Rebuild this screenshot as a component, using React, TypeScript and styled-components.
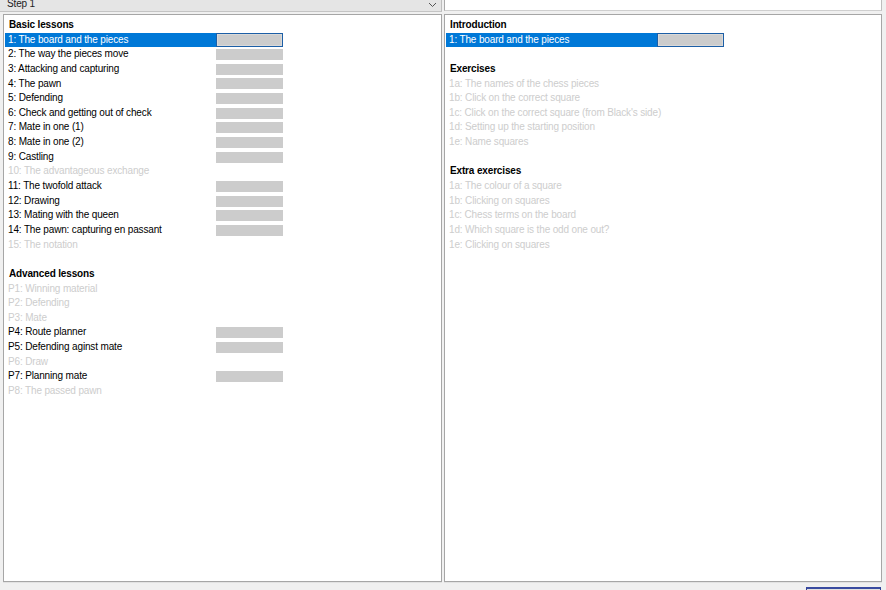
import React from "react";
import styled, { createGlobalStyle } from "styled-components";

const GlobalStyle = createGlobalStyle`
  html, body { margin: 0; padding: 0; background: #f0f0f0; overflow: hidden; }
  body { font-family: "Liberation Sans", Arial, sans-serif; }
  * { box-sizing: border-box; }
`;

const ROW = 14.65;

const Window = styled.div`
  width: 886px;
  height: 590px;
  background: #f0f0f0;
  display: flex;
  flex-direction: column;
  overflow: hidden;
  font-family: "Liberation Sans", Arial, sans-serif;
  font-size: 10px;
  letter-spacing: -0.15px;
  color: #000;
`;

const TopBar = styled.div`
  display: grid;
  grid-template-columns: 442px 438px;
  column-gap: 2px;
  height: 12px;
  flex-shrink: 0;
`;

const Combo = styled.div`
  height: 12px;
  background: #e5e5e5;
  border-bottom: 1px solid #c4c4c4;
  border-right: 1px solid #bdbdbd;
  display: flex;
  align-items: flex-end;
  justify-content: space-between;
  padding: 0 4px 0 7px;
  line-height: 14px;
  color: #222;
`;

const Chevron = styled.svg`
  width: 9px;
  height: 6px;
  margin-bottom: 3px;
`;

const TextBox = styled.div`
  height: 11px;
  background: #fff;
  border-left: 1px solid #a9a9a9;
  border-right: 1px solid #bdbdbd;
  border-bottom: 1px solid #cfcfcf;
`;

const Panels = styled.div`
  display: grid;
  grid-template-columns: 439px 438px;
  column-gap: 2px;
  padding-left: 3px;
  margin-top: 2px;
  height: 568px;
  flex-shrink: 0;
`;

const Panel = styled.div`
  background: #fff;
  border: 1px solid #a6a6a6;
  box-shadow: 0 1px 0 #e2e2e2;
  padding: 3px 1px 2px;
  overflow: hidden;
`;

const Section = styled.div<{ $first?: boolean }>`
  margin-top: ${(p) => (p.$first ? 0 : ROW)}px;
`;

const Header = styled.div`
  height: ${ROW}px;
  line-height: ${ROW}px;
  padding-left: 4px;
  font-weight: bold;
`;

const Row = styled.div`
  height: ${ROW}px;
  display: flex;
  align-items: center;
  white-space: nowrap;
`;

const Label = styled.div<{ $selected?: boolean; $disabled?: boolean }>`
  width: 211px;
  height: 100%;
  line-height: ${ROW}px;
  padding-left: 3px;
  background: ${(p) => (p.$selected ? "#0078d7" : "transparent")};
  color: ${(p) => (p.$selected ? "#fff" : p.$disabled ? "#cdcdcd" : "#000")};
  overflow: visible;
`;

const Bar = styled.div<{ $selected?: boolean }>`
  width: 67px;
  height: ${(p) => (p.$selected ? "100%" : "11px")};
  background: #cccccc;
  border: ${(p) => (p.$selected ? "1px solid #1d5fa6" : "none")};
  box-shadow: ${(p) => (p.$selected ? "inset 0 0 0 1px #d9d9d9" : "none")};
`;

const Footer = styled.div`
  display: flex;
  justify-content: flex-end;
  padding: 5px 5px 0 0;
  flex-shrink: 0;
`;

const Button = styled.div`
  width: 75px;
  height: 23px;
  border: 1px solid #2e3f96;
  border-top: 2px solid #3a4ba0;
  background: #e1e1e1;
`;

type Item = { text: string; enabled: boolean };
type SectionData = { title: string; items: Item[] };

const on = (text: string): Item => ({ text, enabled: true });
const off = (text: string): Item => ({ text, enabled: false });

const leftSections: SectionData[] = [
  {
    title: "Basic lessons",
    items: [
      on("1: The board and the pieces"),
      on("2: The way the pieces move"),
      on("3: Attacking and capturing"),
      on("4: The pawn"),
      on("5: Defending"),
      on("6: Check and getting out of check"),
      on("7: Mate in one (1)"),
      on("8: Mate in one (2)"),
      on("9: Castling"),
      off("10: The advantageous exchange"),
      on("11: The twofold attack"),
      on("12: Drawing"),
      on("13: Mating with the queen"),
      on("14: The pawn: capturing en passant"),
      off("15: The notation"),
    ],
  },
  {
    title: "Advanced lessons",
    items: [
      off("P1: Winning material"),
      off("P2: Defending"),
      off("P3: Mate"),
      on("P4: Route planner"),
      on("P5: Defending aginst mate"),
      off("P6: Draw"),
      on("P7: Planning mate"),
      off("P8: The passed pawn"),
    ],
  },
];

const rightSections: SectionData[] = [
  { title: "Introduction", items: [on("1: The board and the pieces")] },
  {
    title: "Exercises",
    items: [
      off("1a: The names of the chess pieces"),
      off("1b: Click on the correct square"),
      off("1c: Click on the correct square (from Black's side)"),
      off("1d: Setting up the starting position"),
      off("1e: Name squares"),
    ],
  },
  {
    title: "Extra exercises",
    items: [
      off("1a: The colour of a square"),
      off("1b: Clicking on squares"),
      off("1c: Chess terms on the board"),
      off("1d: Which square is the odd one out?"),
      off("1e: Clicking on squares"),
    ],
  },
];

function LessonList({ sections }: { sections: SectionData[] }) {
  return (
    <Panel>
      {sections.map((s, si) => (
        <Section key={s.title} $first={si === 0}>
          <Header>{s.title}</Header>
          {s.items.map((it, ii) => {
            const selected = si === 0 && ii === 0;
            return (
              <Row key={it.text}>
                <Label $selected={selected} $disabled={!it.enabled}>
                  {it.text}
                </Label>
                {it.enabled && <Bar $selected={selected} />}
              </Row>
            );
          })}
        </Section>
      ))}
    </Panel>
  );
}

export default function App() {
  return (
    <>
      <GlobalStyle />
      <Window>
        <TopBar>
          <Combo>
            <span>Step 1</span>
            <Chevron viewBox="0 0 9 6">
              <path d="M1 1 L4.5 4.5 L8 1" fill="none" stroke="#555" strokeWidth="1" />
            </Chevron>
          </Combo>
          <TextBox />
        </TopBar>
        <Panels>
          <LessonList sections={leftSections} />
          <LessonList sections={rightSections} />
        </Panels>
        <Footer>
          <Button />
        </Footer>
      </Window>
    </>
  );
}
